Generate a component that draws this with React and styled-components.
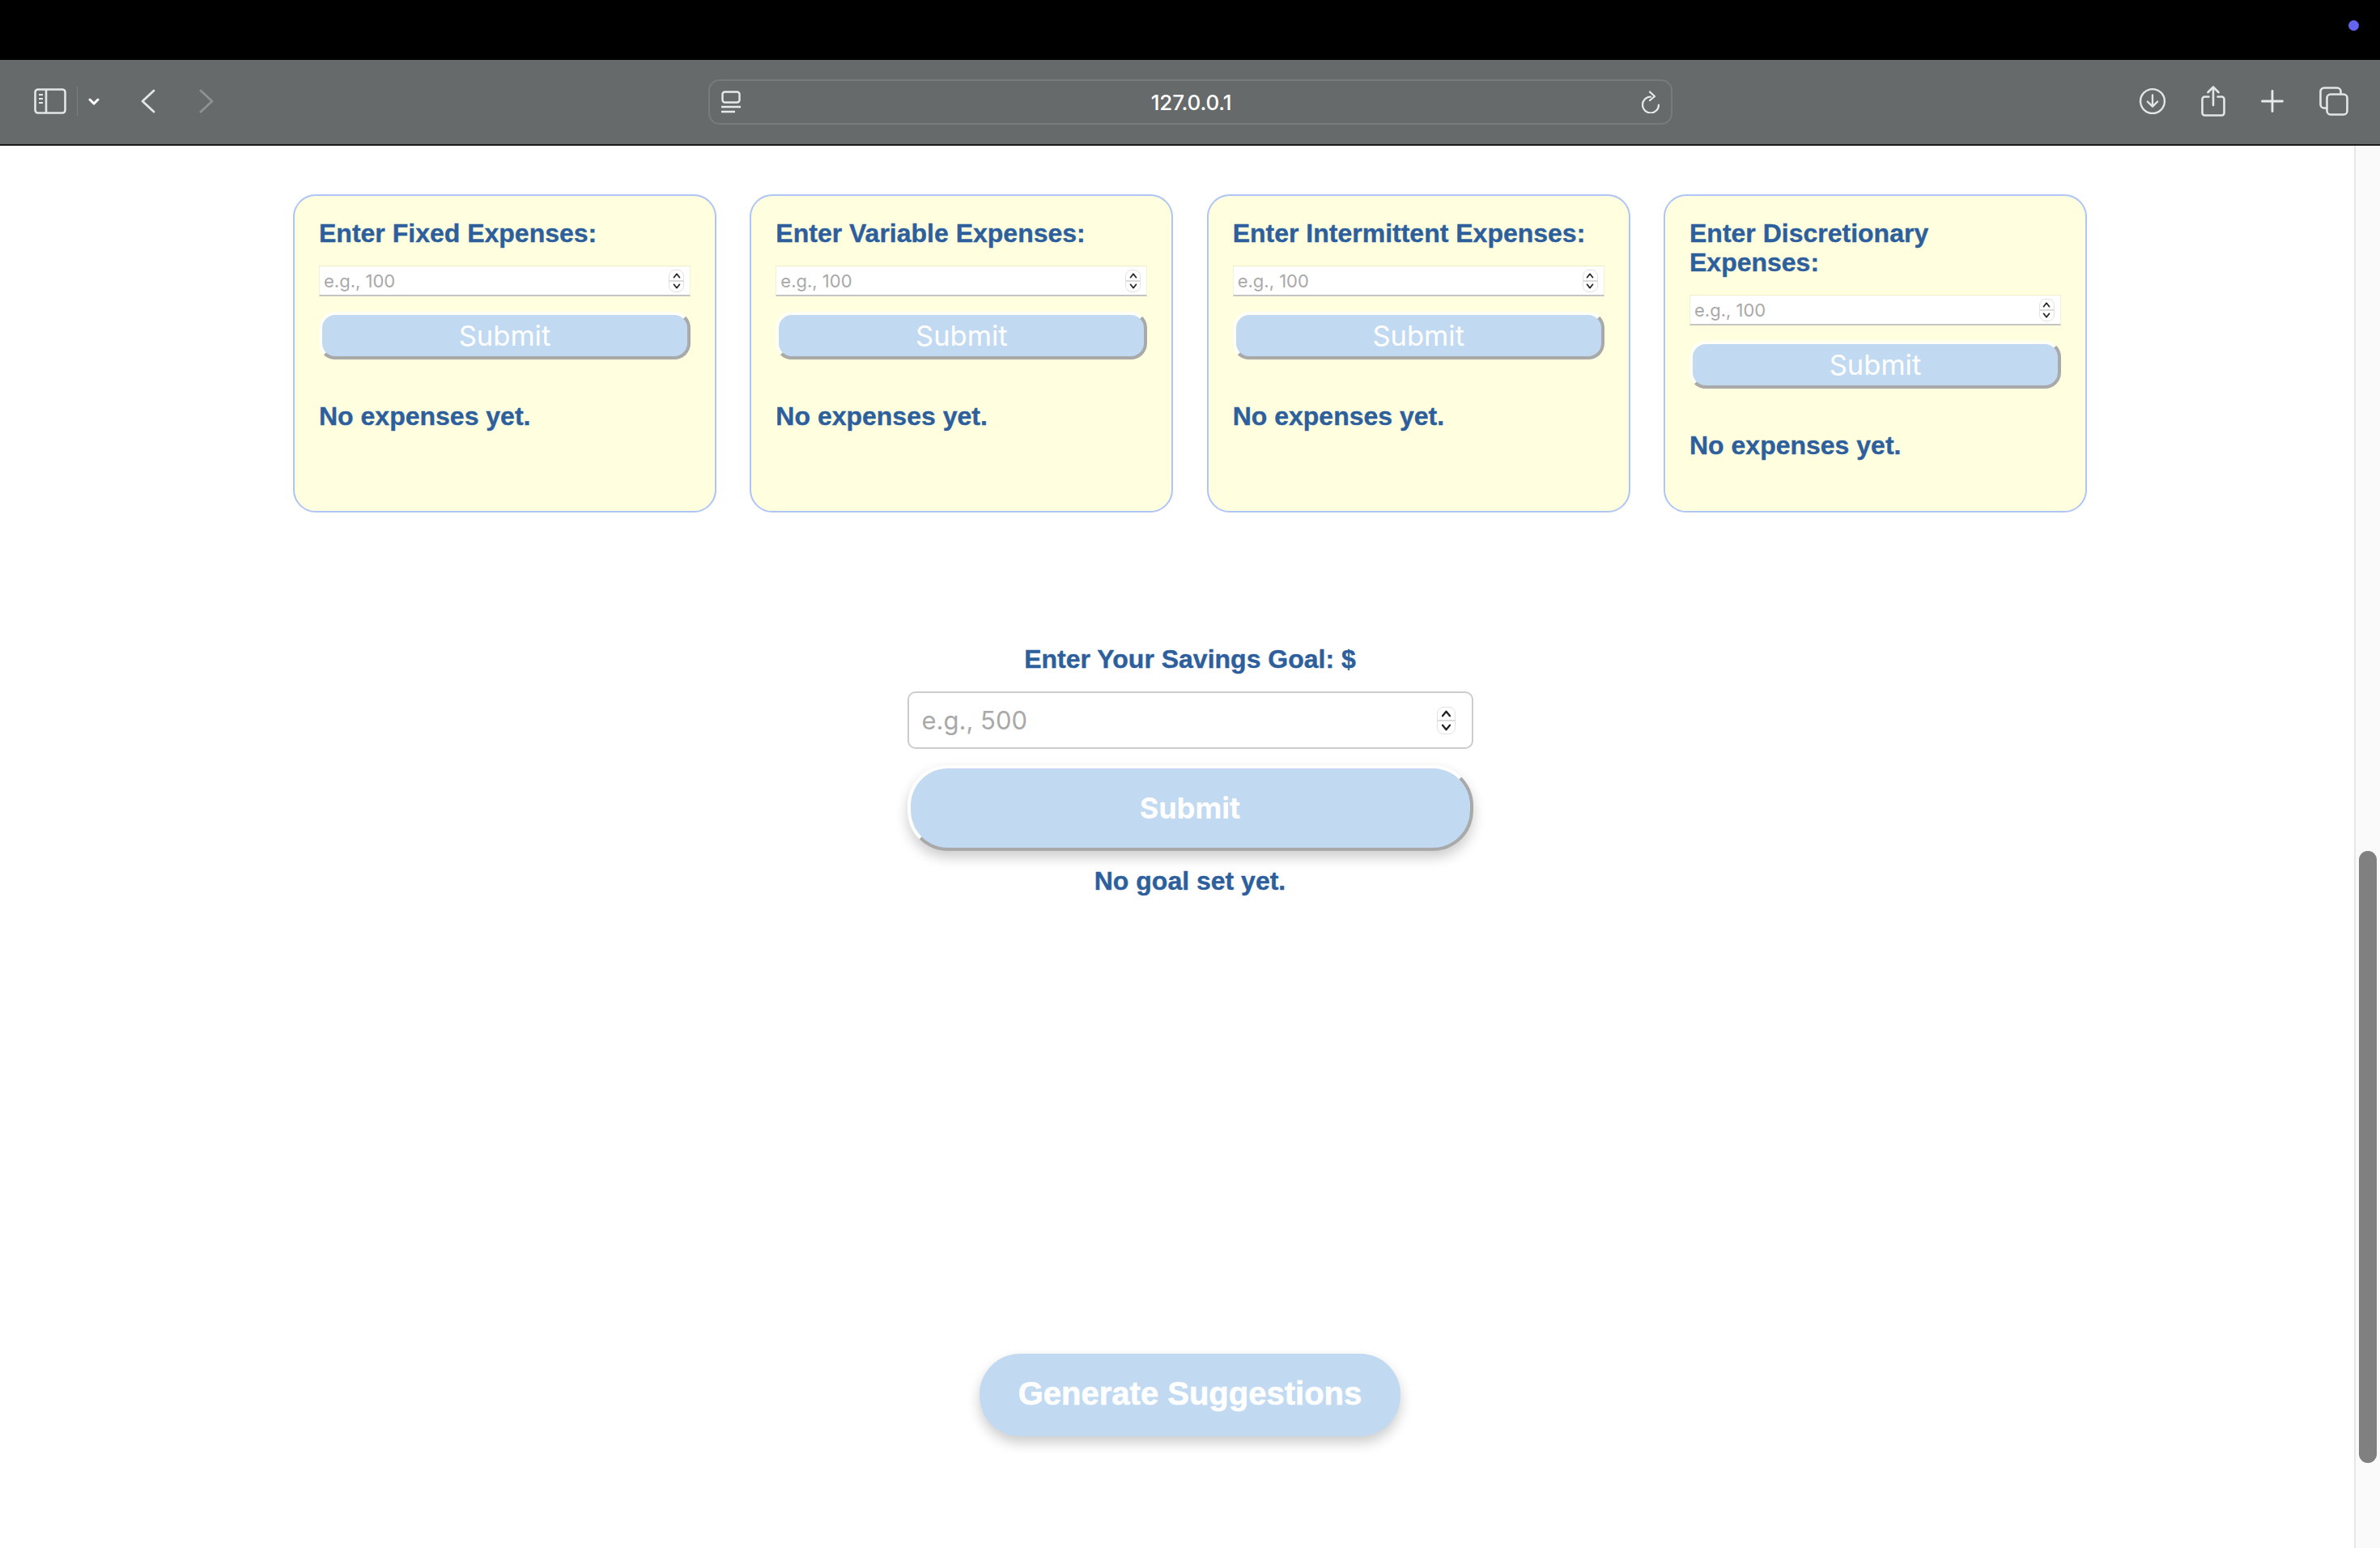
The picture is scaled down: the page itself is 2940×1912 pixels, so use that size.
import React from "react";
import styled, { createGlobalStyle } from "styled-components";

const GlobalStyle = createGlobalStyle`
  html, body {
    margin: 0;
    padding: 0;
    background: #fff;
    overflow: hidden;
  }
`;

const EXPENSES = ["Fixed", "Variable", "Intermittent", "Discretionary"];

function SidebarIcon() {
  return (
    <IconSvg width="40" height="32" viewBox="0 0 40 32" fill="none" stroke="#e4e6e6" strokeWidth="2.6">
      <rect x="1.5" y="1.5" width="37" height="29" rx="3.5" />
      <path d="M15 1.5v29" />
      <path d="M6 8h5M6 13h5M6 18h5" strokeWidth="2" />
    </IconSvg>
  );
}

function ChevronDown() {
  return (
    <IconSvg width="14" height="9" viewBox="0 0 14 9" fill="none" stroke="#fff" strokeWidth="3" strokeLinecap="round" strokeLinejoin="round">
      <path d="M2 2l5 5 5-5" />
    </IconSvg>
  );
}

function BackIcon({ dim }) {
  return (
    <IconSvg width="18" height="30" viewBox="0 0 18 30" fill="none" stroke={dim ? "#8e9292" : "#e4e6e6"} strokeWidth="2.8" strokeLinecap="round" strokeLinejoin="round">
      <path d={dim ? "M2 2l14 13-14 13" : "M16 2L2 15l14 13"} />
    </IconSvg>
  );
}

function PageIcon() {
  return (
    <IconSvg width="24" height="28" viewBox="0 0 24 28" fill="none" stroke="#e8eaea" strokeWidth="2.4">
      <rect x="1.5" y="1.5" width="21" height="13" rx="3" />
      <path d="M0 20h24M0 26h17" />
    </IconSvg>
  );
}

function ReloadIcon() {
  return (
    <IconSvg width="24" height="28" viewBox="0 0 24 28" fill="none" stroke="#e8eaea" strokeWidth="2.2" strokeLinecap="round" strokeLinejoin="round">
      <path d="M11 7.500a10 10 0 1 0 10 10" />
      <path d="M10 1.500l6 5.500-6 5" />
    </IconSvg>
  );
}

function DownloadIcon() {
  return (
    <IconSvg width="34" height="34" viewBox="0 0 36 36" fill="none" stroke="#e4e6e6" strokeWidth="2.5" strokeLinecap="round" strokeLinejoin="round">
      <circle cx="18" cy="18" r="15.8" />
      <path d="M18 10v15M11.500 18.500L18 25l6.500-6.500" />
    </IconSvg>
  );
}

function ShareIcon() {
  return (
    <IconSvg width="30" height="38" viewBox="0 0 30 38" fill="none" stroke="#e4e6e6" strokeWidth="2.6" strokeLinecap="round" strokeLinejoin="round">
      <path d="M9.500 13.500H4.500a3 3 0 0 0-3 3v17a3 3 0 0 0 3 3h21a3 3 0 0 0 3-3v-17a3 3 0 0 0-3-3h-5" />
      <path d="M15 24V2M8.500 8L15 1.500 21.500 8" />
    </IconSvg>
  );
}

function PlusIcon() {
  return (
    <IconSvg width="28" height="28" viewBox="0 0 28 28" fill="none" stroke="#e8eaea" strokeWidth="2.8" strokeLinecap="round">
      <path d="M14 1.500v25M1.500 14h25" />
    </IconSvg>
  );
}

function TabsIcon() {
  return (
    <IconSvg width="36" height="36" viewBox="0 0 36 36" fill="none" stroke="#e4e6e6" strokeWidth="2.6" strokeLinejoin="round">
      <rect x="9.500" y="9.500" width="25" height="25" rx="4.5" />
      <path d="M9 26.500H6a4.500 4.500 0 0 1-4.500-4.500V6A4.500 4.500 0 0 1 6 1.500h16A4.500 4.500 0 0 1 26.500 6v3" />
    </IconSvg>
  );
}

function Stepper({ $large }) {
  const w = $large ? 13 : 10;
  const h = $large ? 9 : 7;
  return (
    <StepperBox $large={$large}>
      <svg width={w} height={h} viewBox="0 0 11 8" fill="none" stroke="#222" strokeWidth="2" strokeLinecap="round" strokeLinejoin="round">
        <path d="M1.500 6.500L5.500 1.500l4 5" />
      </svg>
      <StepperLine />
      <svg width={w} height={h} viewBox="0 0 11 8" fill="none" stroke="#222" strokeWidth="2" strokeLinecap="round" strokeLinejoin="round">
        <path d="M1.500 1.500L5.500 6.500l4-5" />
      </svg>
    </StepperBox>
  );
}

function ExpenseCard({ name }) {
  return (
    <Card>
      <CardTitle>Enter {name} Expenses:</CardTitle>
      <InputWrap>
        <CardInput type="number" placeholder="e.g., 100" />
        <Stepper />
      </InputWrap>
      <CardButton>Submit</CardButton>
      <CardStatus>No expenses yet.</CardStatus>
    </Card>
  );
}

export default function App() {
  return (
    <>
      <GlobalStyle />
      <Screen>
        <MenuBar>
          <RecordingDot />
        </MenuBar>
        <Toolbar>
          <ToolbarLeft>
            <SidebarIcon />
            <ToolbarDivider />
            <ChevronDown />
            <BackButton>
              <BackIcon />
            </BackButton>
            <ForwardButton>
              <BackIcon dim />
            </ForwardButton>
          </ToolbarLeft>
          <AddressBar>
            <PageIcon />
            <Url>127.0.0.1</Url>
            <ReloadIcon />
          </AddressBar>
          <ToolbarRight>
            <DownloadSlot>
              <DownloadIcon />
            </DownloadSlot>
            <ShareIcon />
            <PlusIcon />
            <TabsIcon />
          </ToolbarRight>
        </Toolbar>
        <Viewport>
          <Page>
            <CardRow>
              {EXPENSES.map((name) => (
                <ExpenseCard key={name} name={name} />
              ))}
            </CardRow>
            <GoalSection>
              <GoalLabel>Enter Your Savings Goal: $</GoalLabel>
              <GoalInputWrap>
                <GoalInput type="number" placeholder="e.g., 500" />
                <Stepper $large />
              </GoalInputWrap>
              <GoalButton>Submit</GoalButton>
              <GoalStatus>No goal set yet.</GoalStatus>
            </GoalSection>
            <GenerateButton>Generate Suggestions</GenerateButton>
          </Page>
          <ScrollTrack>
            <ScrollThumb />
          </ScrollTrack>
        </Viewport>
      </Screen>
    </>
  );
}

const Screen = styled.div`
  display: flex;
  flex-direction: column;
  width: 2940px;
  height: 1912px;
  overflow: hidden;
  font-family: "Liberation Sans", Arial, sans-serif;
`;

const MenuBar = styled.div`
  position: relative;
  height: 74px;
  background: #000;
`;

const RecordingDot = styled.div`
  position: absolute;
  left: 2901px;
  top: 25px;
  width: 13px;
  height: 13px;
  border-radius: 50%;
  background: #6464ee;
`;

const Toolbar = styled.div`
  display: grid;
  grid-template-columns: 1fr 1188px 1fr;
  align-items: center;
  box-sizing: border-box;
  height: 106px;
  padding: 0 39px 2px 42px;
  background: #666a6b;
  border-bottom: 2px solid #1c1c1c;
`;

const IconSvg = styled.svg`
  display: block;
  flex-shrink: 0;
`;

const ToolbarLeft = styled.div`
  display: flex;
  align-items: center;
`;

const ToolbarDivider = styled.div`
  width: 1px;
  height: 36px;
  margin: 0 13px;
  background: #7b7f80;
`;

const BackButton = styled.div`
  margin-left: 51px;
`;

const ForwardButton = styled.div`
  margin-left: 54px;
`;

const AddressBar = styled.div`
  display: flex;
  align-items: center;
  justify-content: space-between;
  box-sizing: border-box;
  height: 56px;
  margin: 2px 0 0 -3px;
  padding: 0 11px 0 14px;
  border: 2px solid #777b7c;
  border-radius: 14px;
`;

const Url = styled.div`
  font-family: Inter, "Liberation Sans", sans-serif;
  font-size: 26px;
  font-weight: 500;
  letter-spacing: -0.2px;
  color: #fff;
`;

const ToolbarRight = styled.div`
  display: flex;
  align-items: center;
  justify-content: flex-end;
  gap: 44px;
`;

const DownloadSlot = styled.div`
  margin-right: -1px;
`;

const Viewport = styled.div`
  position: relative;
  flex: 1;
  background: #fff;
`;

const Page = styled.main`
  display: flex;
  flex-direction: column;
  align-items: center;
  padding-top: 60px;
`;

const CardRow = styled.section`
  display: grid;
  grid-template-columns: repeat(4, 523px);
  gap: 41.34px;
`;

const Card = styled.article`
  display: flex;
  flex-direction: column;
  padding: 28px 30px 63px;
  background: #ffffe0;
  border: 2px solid #aec5f5;
  border-radius: 28px;
`;

const CardTitle = styled.h3`
  margin: 0 0 22px;
  font-size: 32px;
  line-height: 36px;
  font-weight: 700;
  color: #2d5f9c;
  -webkit-text-stroke: 0.4px #2d5f9c;
`;

const InputWrap = styled.div`
  position: relative;
  height: 38px;
`;

const CardInput = styled.input`
  box-sizing: border-box;
  display: block;
  width: 100%;
  height: 100%;
  padding: 0 5px;
  font-family: Inter, "Liberation Sans", sans-serif;
  font-size: 22px;
  background: #fff;
  border: none;
  border-top: 1px solid #efecc8;
  border-bottom: 2px solid #c4c4c0;
  border-left: 1px solid #f4f2d4;
  border-right: 1px solid #f4f2d4;
  outline: none;
  appearance: textfield;

  &::placeholder {
    color: #a9a9a9;
  }
  &::-webkit-inner-spin-button,
  &::-webkit-outer-spin-button {
    appearance: none;
    margin: 0;
  }
`;

const StepperBox = styled.div`
  position: absolute;
  top: 50%;
  right: ${(p) => (p.$large ? "22px" : "8px")};
  display: flex;
  flex-direction: column;
  align-items: center;
  justify-content: space-between;
  box-sizing: border-box;
  width: ${(p) => (p.$large ? "23px" : "19px")};
  height: ${(p) => (p.$large ? "34px" : "28px")};
  padding: 3px 0;
  background: #fff;
  border: 1px solid #e2e2e2;
  border-radius: 8px;
  transform: translateY(-50%);
`;

const StepperLine = styled.div`
  width: 100%;
  height: 2px;
  background: #dcdcdc;
`;

const CardButton = styled.button`
  box-sizing: border-box;
  width: 100%;
  height: 59px;
  margin: 19px 0 0;
  padding: 0;
  font-family: Inter, "Liberation Sans", sans-serif;
  font-size: 34.5px;
  font-weight: 400;
  color: #fff;
  background: #c1daf2;
  border: 4px solid;
  border-color: #fffff6 #a9a9a9 #a9a9a9 #fffff6;
  border-radius: 20px;
`;

const CardStatus = styled.p`
  margin: 52px 0 0;
  font-size: 32px;
  line-height: 36px;
  font-weight: 700;
  color: #2d5f9c;
  -webkit-text-stroke: 0.4px #2d5f9c;
`;

const GoalSection = styled.section`
  display: flex;
  flex-direction: column;
  align-items: center;
  margin-top: 163px;
  width: 699px;
`;

const GoalLabel = styled.label`
  margin-bottom: 22px;
  font-size: 32px;
  line-height: 36px;
  font-weight: 700;
  color: #2d5f9c;
  -webkit-text-stroke: 0.4px #2d5f9c;
`;

const GoalInputWrap = styled.div`
  position: relative;
  width: 100%;
  height: 71px;
`;

const GoalInput = styled.input`
  box-sizing: border-box;
  display: block;
  width: 100%;
  height: 100%;
  padding: 0 16px;
  font-family: Inter, "Liberation Sans", sans-serif;
  font-size: 31px;
  background: #fff;
  border: 2px solid #ccc;
  border-radius: 10px;
  outline: none;
  appearance: textfield;

  &::placeholder {
    color: #a9a9a9;
  }
  &::-webkit-inner-spin-button,
  &::-webkit-outer-spin-button {
    appearance: none;
    margin: 0;
  }
`;

const GoalButton = styled.button`
  box-sizing: border-box;
  width: 100%;
  height: 106px;
  margin-top: 20px;
  padding: 0;
  font-family: Inter, "Liberation Sans", sans-serif;
  font-size: 36px;
  font-weight: 700;
  color: #fff;
  background: #c1daf2;
  border: 4px solid;
  border-color: #fff #a9a9a9 #a9a9a9 #fff;
  border-radius: 50px;
  box-shadow: 0 8px 16px rgba(0, 0, 0, 0.2);
`;

const GoalStatus = styled.p`
  margin: 19px 0 0;
  font-size: 32px;
  line-height: 36px;
  font-weight: 700;
  color: #2d5f9c;
  -webkit-text-stroke: 0.4px #2d5f9c;
`;

const GenerateButton = styled.button`
  box-sizing: border-box;
  width: 520px;
  height: 102px;
  margin-top: 566px;
  padding: 0 0 3px;
  font-family: "Liberation Sans", Arial, sans-serif;
  font-size: 40px;
  font-weight: 700;
  color: #fff;
  -webkit-text-stroke: 0.6px #fff;
  background: #c1daf2;
  border: none;
  border-radius: 50px;
  box-shadow: 0 8px 16px rgba(0, 0, 0, 0.2);
`;

const ScrollTrack = styled.div`
  position: absolute;
  top: 0;
  right: 0;
  bottom: 0;
  box-sizing: border-box;
  width: 32px;
  padding: 871px 4px 0 4px;
  background: #fafafa;
  border-left: 2px solid #e6e6e6;
`;

const ScrollThumb = styled.div`
  height: 756px;
  background: #808080;
  border-radius: 11px;
`;
